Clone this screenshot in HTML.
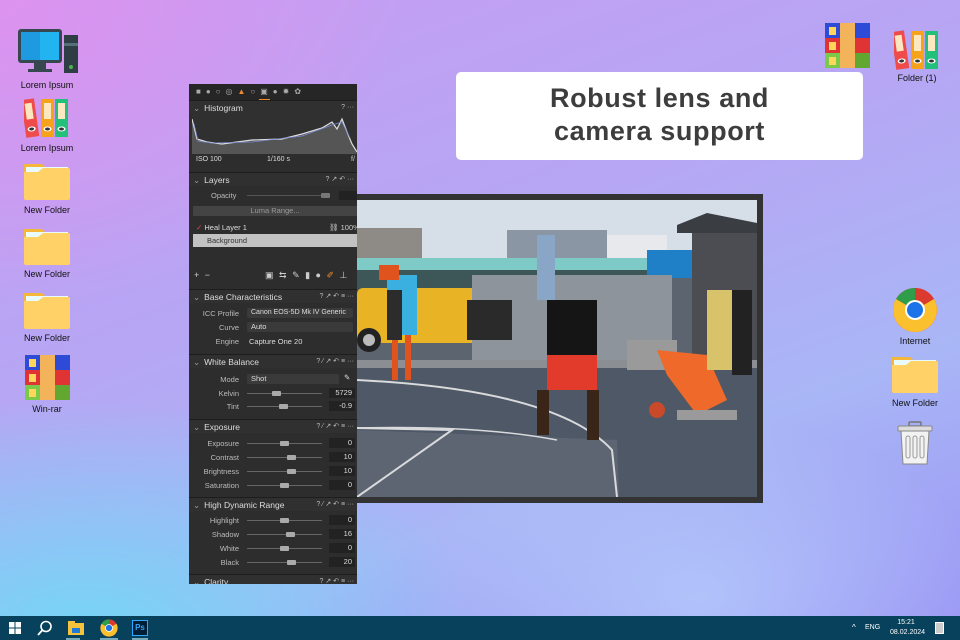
<!DOCTYPE html>
<html><head><meta charset="utf-8"><style>
*{margin:0;padding:0;box-sizing:border-box}
body{width:960px;height:640px;overflow:hidden;position:relative;font-family:"Liberation Sans",sans-serif;
background:
radial-gradient(ellipse 420px 260px at 700px 600px,rgba(190,220,255,.55),rgba(190,220,255,0) 70%),
radial-gradient(ellipse 500px 300px at 80px 640px,#74d6f6,rgba(116,214,246,0) 80%),
radial-gradient(ellipse 500px 380px at 0px 0px,#dc93ef,rgba(220,147,239,0) 80%),
linear-gradient(160deg,#c89cf2 0%,#b6a6f4 40%,#a9b6f6 70%,#9a93f4 100%);}
.ic{position:absolute;text-align:center;font-size:9px;color:#111;width:70px}
.ic svg{display:block;margin:0 auto}
.panel{position:absolute;left:189px;top:84px;width:168px;height:500px;background:#2d2d2d;color:#ccc;font-size:7.5px;overflow:hidden}
.p{position:absolute;white-space:nowrap}
.hdr{position:absolute;left:0;width:168px;height:14px;background:#303030;border-top:1px solid #1d1d1d;font-size:8.5px;color:#ddd;padding-left:4px;line-height:14px}
.hdr i{font-style:normal;color:#999;margin-right:4px}
.hdr b{position:absolute;right:3px;font-weight:normal;color:#bbb;font-size:7px}
.lab{position:absolute;right:118px;text-align:right;color:#bbb}
.sl{position:absolute;left:58px;width:75px;height:1px;background:#666}
.kn{position:absolute;width:9px;height:5px;background:#aaa;border-radius:1px}
.val{position:absolute;right:2px;width:26px;height:10px;background:#222;text-align:right;padding-right:3px;color:#ddd;line-height:10px}
.drop{position:absolute;left:58px;width:106px;height:10px;background:#3a3a3a;border-radius:2px;color:#ddd;padding-left:4px;line-height:10px}
.tb{position:absolute;left:0;top:616px;width:960px;height:24px;background:#07415c}
</style></head><body>
<svg width="0" height="0" style="position:absolute">
<defs>
<symbol id="fold" viewBox="0 0 46 40"><path d="M0 4h18l4 4h22a2 2 0 0 1 2 2v28a2 2 0 0 1-2 2H2a2 2 0 0 1-2-2z" fill="#f5b73a"/><rect x="2" y="7" width="42" height="8" fill="#e8fbff"/><path d="M0 12h14l5-4h25a2 2 0 0 1 2 2v28a2 2 0 0 1-2 2H2a2 2 0 0 1-2-2z" fill="#ffd166"/></symbol>
<symbol id="rar" viewBox="0 0 45 45"><rect x="0" y="0" width="15" height="15" fill="#2d4bd6"/><rect x="30" y="0" width="15" height="15" fill="#2d4bd6"/><rect x="0" y="15" width="15" height="15" fill="#e03434"/><rect x="30" y="15" width="15" height="15" fill="#e03434"/><rect x="0" y="30" width="15" height="15" fill="#7ac94a"/><rect x="30" y="30" width="15" height="15" fill="#62a830"/><rect x="15" y="0" width="15" height="45" fill="#f3b35a"/><rect x="4" y="4" width="7" height="8" fill="#ffd55a"/><rect x="4" y="19" width="7" height="8" fill="#ffd55a"/><rect x="4" y="34" width="7" height="8" fill="#ffd55a"/></symbol>
<symbol id="bind" viewBox="0 0 46 44"><g transform="rotate(-8 8 40)"><rect x="2" y="4" width="13" height="38" fill="#ef4b4b"/><rect x="5" y="8" width="7" height="16" fill="#fbe7c0"/><ellipse cx="8.5" cy="34" rx="4" ry="2.5" fill="#fff"/><ellipse cx="8.5" cy="34" rx="2.5" ry="1.5" fill="#333"/></g><rect x="17" y="4" width="13" height="38" fill="#f7a21b"/><rect x="20" y="8" width="7" height="16" fill="#fbe7c0"/><ellipse cx="23.5" cy="34" rx="4" ry="2.5" fill="#fff"/><ellipse cx="23.5" cy="34" rx="2.5" ry="1.5" fill="#333"/><rect x="31" y="4" width="13" height="38" fill="#22c07a"/><rect x="34" y="8" width="7" height="16" fill="#fbe7c0"/><ellipse cx="37.5" cy="34" rx="4" ry="2.5" fill="#fff"/><ellipse cx="37.5" cy="34" rx="2.5" ry="1.5" fill="#333"/></symbol>
</defs></svg>

<div class="ic" style="left:12px;top:27px"><svg width="62" height="50" viewBox="0 0 62 50"><rect x="2" y="2" width="44" height="34" rx="3" fill="#37474f"/><rect x="5" y="5" width="38" height="28" fill="#1e9ae0"/><rect x="24" y="5" width="19" height="28" fill="#22b4f0"/><rect x="18" y="36" width="12" height="6" fill="#37474f"/><rect x="12" y="42" width="24" height="3" fill="#37474f"/><rect x="48" y="8" width="14" height="38" fill="#2f3d44"/><rect x="48" y="16" width="14" height="3" fill="#546e7a"/><circle cx="55" cy="40" r="2" fill="#4caf50"/></svg><div style="margin-top:3px">Lorem Ipsum</div></div>
<div class="ic" style="left:12px;top:95px"><svg width="46" height="44"><use href="#bind"/></svg><div style="margin-top:4px">Lorem Ipsum</div></div>
<div class="ic" style="left:12px;top:160px"><svg width="46" height="40"><use href="#fold"/></svg><div style="margin-top:5px">New Folder</div></div>
<div class="ic" style="left:12px;top:225px"><svg width="46" height="40"><use href="#fold"/></svg><div style="margin-top:4px">New Folder</div></div>
<div class="ic" style="left:12px;top:289px"><svg width="46" height="40"><use href="#fold"/></svg><div style="margin-top:4px">New Folder</div></div>
<div class="ic" style="left:12px;top:355px"><svg width="45" height="45"><use href="#rar"/></svg><div style="margin-top:4px">Win-rar</div></div>

<div class="ic" style="left:812px;top:22px"><svg width="45" height="47"><use href="#rar"/></svg></div>
<div class="ic" style="left:882px;top:27px"><svg width="46" height="44"><use href="#bind"/></svg><div style="margin-top:2px">Folder (1)</div></div>
<div class="ic" style="left:880px;top:287px"><svg width="46" height="46" viewBox="0 0 46 46"><circle cx="23" cy="23" r="22" fill="#db3a2e"/><path d="M23 23L4 12A22 22 0 0 0 23 45z" fill="#fbc02d"/><path d="M23 23L4 12A22 22 0 0 1 23 1z" fill="#2e9e4a"/><path d="M23 23L42 12 A22 22 0 0 0 23 1z" fill="#db3a2e"/><path d="M23 23L23 45A22 22 0 0 0 42 12z" fill="#fbc02d"/><circle cx="23" cy="23" r="10" fill="#fff"/><circle cx="23" cy="23" r="8" fill="#1a73e8"/></svg><div style="margin-top:3px">Internet</div></div>
<div class="ic" style="left:880px;top:353px"><svg width="46" height="40"><use href="#fold"/></svg><div style="margin-top:5px">New Folder</div></div>
<div class="ic" style="left:880px;top:421px"><svg width="40" height="44" viewBox="0 0 40 44"><rect x="14" y="1" width="12" height="4" rx="1" fill="none" stroke="#777" stroke-width="1.5"/><rect x="3" y="5" width="34" height="5" rx="1" fill="#ddd" stroke="#888"/><path d="M6 10h28l-2 33H8z" fill="#f2f2f2" stroke="#888"/><rect x="11" y="15" width="4" height="22" rx="2" fill="none" stroke="#999"/><rect x="18" y="15" width="4" height="22" rx="2" fill="none" stroke="#999"/><rect x="25" y="15" width="4" height="22" rx="2" fill="none" stroke="#999"/></svg></div>

<div style="position:absolute;left:456px;top:72px;width:407px;height:88px;background:#fff;border-radius:5px;text-align:center;color:#3d3d3d;font-weight:bold;font-size:27px;line-height:33px;padding-top:10px;letter-spacing:.6px">Robust lens and<br>camera support</div>

<div style="position:absolute;left:351px;top:194px;width:412px;height:309px;background:#333"></div>
<svg style="position:absolute;left:357px;top:200px" width="400" height="297" viewBox="0 0 400 297">
<rect width="400" height="297" fill="#5c6470"/>
<rect width="400" height="70" fill="#d6dee8"/>
<rect x="0" y="28" width="65" height="30" fill="#8e8a86"/>
<rect x="150" y="30" width="100" height="28" fill="#8a96a4"/>
<rect x="250" y="35" width="60" height="25" fill="#e7e9ec"/>
<rect x="0" y="58" width="300" height="14" fill="#7dcac6"/>
<rect x="0" y="70" width="300" height="30" fill="#3d5658"/>
<rect x="290" y="50" width="80" height="28" fill="#1f7fc7"/>
<rect x="335" y="30" width="65" height="130" fill="#4b4d52"/>
<path d="M320 25l30-12 50 10v10H320z" fill="#3a3d42"/>
<rect x="0" y="88" width="120" height="55" rx="6" fill="#e8b425"/>
<circle cx="12" cy="140" r="12" fill="#222"/><circle cx="12" cy="140" r="6" fill="#bbb"/>
<rect x="115" y="75" width="200" height="90" fill="#8e949c"/>
<rect x="0" y="160" width="400" height="8" fill="#8b8f94"/>
<rect x="0" y="168" width="400" height="129" fill="#4f5866"/>
<path d="M0 230 L260 240 L262 297 L0 297z" fill="#5d6572"/>
<path d="M0 180 Q200 190 255 250 L260 297" fill="none" stroke="#d8dadc" stroke-width="2"/>
<path d="M0 228 L95 230 L0 297" fill="none" stroke="#d8dadc" stroke-width="2"/>
<path d="M0 228 Q120 225 200 240" fill="none" stroke="#d8dadc" stroke-width="1.5"/>
<rect x="30" y="75" width="30" height="60" fill="#3ab0e0"/><rect x="22" y="65" width="20" height="15" fill="#e1531e"/><rect x="35" y="135" width="6" height="45" fill="#e1531e"/><rect x="48" y="135" width="6" height="45" fill="#e1531e"/>
<rect x="30" y="90" width="15" height="50" fill="#2c2c2c"/>
<rect x="190" y="100" width="50" height="55" fill="#151515"/><rect x="190" y="155" width="50" height="35" fill="#e23b2c"/><rect x="180" y="190" width="12" height="45" fill="#3a2519"/><rect x="230" y="190" width="12" height="50" fill="#3a2519"/>
<rect x="270" y="140" width="50" height="30" fill="#9a9a9a"/><path d="M300 150 L350 155 L370 200 L340 215 L310 175z" fill="#ef6a2a"/><rect x="320" y="210" width="60" height="10" fill="#9a9a9a"/><circle cx="300" cy="210" r="8" fill="#c94a2a"/>
<rect x="110" y="100" width="45" height="40" fill="#2a2a2a"/><rect x="180" y="35" width="18" height="65" fill="#8aa6c7"/>
<rect x="350" y="90" width="30" height="80" fill="#d9c36a"/><rect x="375" y="90" width="20" height="85" fill="#222"/>
</svg>

<div class="panel">
<div style="position:absolute;left:0;top:0;width:168px;height:16px;background:#262626"></div>
<div class="p" style="left:7px;top:3px;color:#aaa;font-size:8px;letter-spacing:5px">■●○◎<span style="color:#f08a2a">▲</span>○▣●✹✿</div>
<div style="position:absolute;left:70px;top:15px;width:11px;height:1px;background:#f08a2a"></div>
<div class="hdr" style="top:16px"><i>⌄</i>Histogram<b>? ···</b></div>
<svg style="position:absolute;left:3px;top:30px" width="165" height="40" viewBox="0 0 165 40"><rect width="165" height="40" fill="#303030"/><path d="M0 40 L0 5 L5 25 L15 28 L30 30 L60 26 L90 25 L110 20 L130 14 L140 8 L145 15 L150 5 L155 18 L160 30 L165 40z" fill="#555"/><path d="M0 5 L5 25 L15 28 L30 30 L60 26 L90 25 L110 20 L130 14 L140 8 L145 15 L150 5 L155 18 L160 30 L165 38" fill="none" stroke="#ddd" stroke-width="1.2"/><path d="M2 10 L6 27 L20 29 L60 28 L110 22 L140 11 L150 8 L158 24" fill="none" stroke="#7a8ad0" stroke-width="0.8"/></svg>
<div class="p" style="left:7px;top:72px;font-size:7px;color:#ddd">ISO 100</div><div class="p" style="left:78px;top:72px;font-size:7px;color:#ddd">1/160 s</div><div class="p" style="left:162px;top:72px;font-size:7px">f/</div>
<div class="hdr" style="top:88px"><i>⌄</i>Layers<b>? ↗ ↶ ···</b></div>
<div class="p" style="left:22px;top:107px;color:#bbb">Opacity</div><div class="sl" style="top:111px;left:58px;width:80px;background:#555"></div><div class="kn" style="left:132px;top:109px;background:#777"></div><div style="position:absolute;left:150px;top:107px;width:18px;height:9px;background:#222"></div>
<div style="position:absolute;left:4px;top:122px;width:164px;height:10px;background:#444;color:#999;text-align:center;line-height:10px">Luma Range...</div>
<div class="p" style="left:7px;top:139px;color:#ddd"><span style="color:#e45">✓</span> Heal Layer 1</div><div class="p" style="left:140px;top:139px;color:#ccc">⛓ 100%</div>
<div style="position:absolute;left:4px;top:150px;width:164px;height:13px;background:#c2c2c2;color:#333;line-height:13px;padding-left:14px">Background</div>
<div class="p" style="left:5px;top:186px;color:#ccc;font-size:9px;word-spacing:3px">+ −  &nbsp; &nbsp; &nbsp; &nbsp; &nbsp;▣ ⇆ ✎ ▮ ● <span style="color:#f08a2a">✐</span> ⊥</div>
<div class="hdr" style="top:205px"><i>⌄</i>Base Characteristics<b>? ↗ ↶ ≡ ···</b></div>
<div class="lab" style="top:225px">ICC Profile</div><div class="drop" style="top:224px;font-size:7px">Canon EOS-5D Mk IV Generic</div>
<div class="lab" style="top:239px">Curve</div><div class="drop" style="top:238px">Auto</div>
<div class="lab" style="top:253px">Engine</div><div class="p" style="left:60px;top:253px;color:#ddd">Capture One 20</div>
<div class="hdr" style="top:270px"><i>⌄</i>White Balance<b>? ⁄ ↗ ↶ ≡ ···</b></div>
<div class="lab" style="top:291px">Mode</div><div class="drop" style="top:290px;width:92px">Shot</div><div class="p" style="left:155px;top:289px;color:#ddd">✎</div>
<div class="lab" style="top:305px">Kelvin</div><div class="sl" style="top:309px"></div><div class="kn" style="left:83px;top:307px"></div><div class="val" style="top:304px">5729</div>
<div class="lab" style="top:318px">Tint</div><div class="sl" style="top:322px"></div><div class="kn" style="left:90px;top:320px"></div><div class="val" style="top:317px">-0.9</div>
<div class="hdr" style="top:335px"><i>⌄</i>Exposure<b>? ⁄ ↗ ↶ ≡ ···</b></div>
<div class="lab" style="top:355px">Exposure</div><div class="sl" style="top:359px"></div><div class="kn" style="left:91px;top:357px"></div><div class="val" style="top:354px">0</div>
<div class="lab" style="top:369px">Contrast</div><div class="sl" style="top:373px"></div><div class="kn" style="left:98px;top:371px"></div><div class="val" style="top:368px">10</div>
<div class="lab" style="top:383px">Brightness</div><div class="sl" style="top:387px"></div><div class="kn" style="left:98px;top:385px"></div><div class="val" style="top:382px">10</div>
<div class="lab" style="top:397px">Saturation</div><div class="sl" style="top:401px"></div><div class="kn" style="left:91px;top:399px"></div><div class="val" style="top:396px">0</div>
<div class="hdr" style="top:413px"><i>⌄</i>High Dynamic Range<b>? ⁄ ↗ ↶ ≡ ···</b></div>
<div class="lab" style="top:432px">Highlight</div><div class="sl" style="top:436px"></div><div class="kn" style="left:91px;top:434px"></div><div class="val" style="top:431px">0</div>
<div class="lab" style="top:446px">Shadow</div><div class="sl" style="top:450px"></div><div class="kn" style="left:97px;top:448px"></div><div class="val" style="top:445px">16</div>
<div class="lab" style="top:460px">White</div><div class="sl" style="top:464px"></div><div class="kn" style="left:91px;top:462px"></div><div class="val" style="top:459px">0</div>
<div class="lab" style="top:474px">Black</div><div class="sl" style="top:478px"></div><div class="kn" style="left:98px;top:476px"></div><div class="val" style="top:473px">20</div>
<div class="hdr" style="top:490px"><i>⌄</i>Clarity<b>? ↗ ↶ ≡ ···</b></div>
</div>

<div class="tb">
<svg style="position:absolute;left:9px;top:6px" width="12" height="12"><rect x="0" y="0" width="5.5" height="5.5" fill="#fff"/><rect x="6.5" y="0" width="5.5" height="5.5" fill="#fff"/><rect x="0" y="6.5" width="5.5" height="5.5" fill="#fff"/><rect x="6.5" y="6.5" width="5.5" height="5.5" fill="#fff"/></svg>
<svg style="position:absolute;left:37px;top:4px" width="16" height="16"><circle cx="9" cy="6.5" r="5" fill="none" stroke="#fff" stroke-width="1.6"/><path d="M5.5 10L1 15" stroke="#fff" stroke-width="1.8"/></svg>
<svg style="position:absolute;left:68px;top:5px" width="16" height="14"><rect x="0" y="0" width="7" height="3" fill="#f5c33b"/><rect x="0" y="2" width="16" height="12" fill="#f5c33b"/><rect x="4" y="7" width="8" height="5" fill="#1e7bd8"/></svg>
<svg style="position:absolute;left:100px;top:3px" width="18" height="18" viewBox="0 0 46 46"><circle cx="23" cy="23" r="22" fill="#db3a2e"/><path d="M23 23L4 12A22 22 0 0 0 23 45z" fill="#fbc02d"/><path d="M23 23L4 12A22 22 0 0 1 23 1z" fill="#2e9e4a"/><path d="M23 23L23 45A22 22 0 0 0 42 12z" fill="#fbc02d"/><circle cx="23" cy="23" r="10" fill="#fff"/><circle cx="23" cy="23" r="8" fill="#1a73e8"/></svg>
<div style="position:absolute;left:132px;top:4px;width:16px;height:16px;background:#001e36;border:1px solid #31a8ff;color:#31a8ff;font-size:8px;font-weight:bold;text-align:center;line-height:14px">Ps</div>
<div style="position:absolute;left:66px;top:22px;width:14px;height:2px;background:#7ab"></div>
<div style="position:absolute;left:100px;top:22px;width:18px;height:2px;background:#7ab"></div>
<div style="position:absolute;left:132px;top:22px;width:16px;height:2px;background:#7ab"></div>
<div style="position:absolute;left:852px;top:7px;color:#fff;font-size:8px">^</div>
<div style="position:absolute;left:865px;top:8px;color:#fff;font-size:7px">ENG</div>
<div style="position:absolute;left:890px;top:2px;color:#fff;font-size:7px;text-align:center;line-height:10px;width:32px">15:21<br>08.02.2024</div>
<div style="position:absolute;left:935px;top:6px;width:9px;height:12px;border:1px solid #fff;background:#ccc"></div>
</div>
</body></html>
